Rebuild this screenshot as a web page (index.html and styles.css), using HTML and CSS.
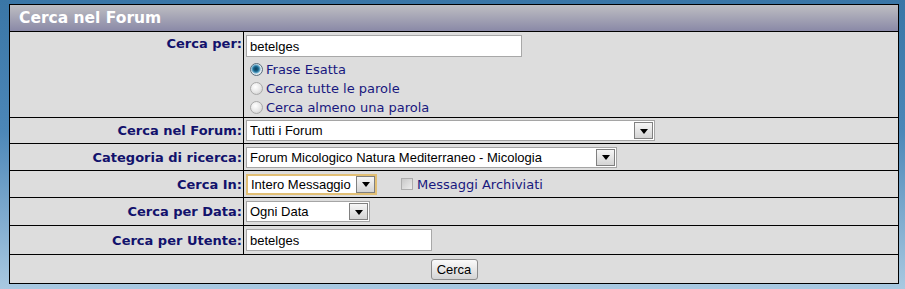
FILE: index.html
```html
<!DOCTYPE html>
<html lang="it">
<head>
    <meta charset="UTF-8">
    <meta name="viewport" content="width=device-width, initial-scale=1.0">
    <title>Cerca nel Forum</title>
    <link rel="stylesheet" href="styles.css">
</head>
<body>
    <form class="search" action="javascript:;">
        <div class="head">Cerca nel Forum</div>

        <div class="label top">Cerca per:</div>
        <div class="value top">
            <input type="text" class="text wide" value="betelges">
            <ul class="options">
                <li><label><input type="radio" name="mode" checked> Frase Esatta</label></li>
                <li><label><input type="radio" name="mode"> Cerca tutte le parole</label></li>
                <li><label><input type="radio" name="mode"> Cerca almeno una parola</label></li>
            </ul>
        </div>

        <div class="label">Cerca nel Forum:</div>
        <div class="value">
            <span class="drop forum">
                <select><option>Tutti i Forum</option></select>
                <span class="arrow"></span>
            </span>
        </div>

        <div class="label">Categoria di ricerca:</div>
        <div class="value">
            <span class="drop category">
                <select><option>Forum Micologico Natura Mediterraneo - Micologia</option></select>
                <span class="arrow"></span>
            </span>
        </div>

        <div class="label">Cerca In:</div>
        <div class="value">
            <span class="drop where focus">
                <select><option>Intero Messaggio</option></select>
                <span class="arrow"></span>
            </span>
            <label class="archive"><input type="checkbox"> Messaggi Archiviati</label>
        </div>

        <div class="label">Cerca per Data:</div>
        <div class="value">
            <span class="drop date">
                <select><option>Ogni Data</option></select>
                <span class="arrow"></span>
            </span>
        </div>

        <div class="label">Cerca per Utente:</div>
        <div class="value">
            <input type="text" class="text user" value="betelges">
        </div>

        <div class="foot">
            <button type="submit" class="btn">Cerca</button>
        </div>
    </form>
</body>
</html>
```

FILE: styles.css
```css
*{
    margin: 0;
    padding: 0;
    box-sizing: border-box;
}
body{
    height: 289px;
    padding: 4px 9px;
    background: linear-gradient(#3a76a6 0%, #4c87b8 45%, #a9c9e1 100%);
    font-family: "DejaVu Sans", Verdana, sans-serif;
    font-size: 13px;
}
.search{
    width: 890px;
    display: grid;
    grid-template-columns: 233px 1fr;
    grid-template-rows: 26px 85px 25px 26px 26px 27px 28px 28px;
    gap: 1px;
    border: 1px solid #000;
    background-color: #000;
}
.search .head{
    grid-column: 1 / 3;
    display: flex;
    align-items: center;
    padding-left: 9px;
    background: linear-gradient(#bebec2, #8a89a7);
    color: #fff;
    font-size: 15.5px;
    font-weight: bold;
}
.search .label{
    display: flex;
    align-items: center;
    justify-content: flex-end;
    padding-right: 1px;
    background-color: #dddddd;
    color: #12126c;
    font-weight: bold;
    font-size: 13px;
}
.search .label.top{
    align-items: flex-start;
    padding-top: 4px;
}
.search .value{
    display: flex;
    align-items: center;
    padding-left: 2px;
    background-color: #dddddd;
}
.search .value.top{
    flex-direction: column;
    align-items: flex-start;
    padding-top: 3px;
}
.text{
    height: 22px;
    border: 1px solid #a8a8a8;
    background: #fff;
    padding: 0 3px;
    font-family: "Liberation Sans", Arial, sans-serif;
    font-size: 13px;
    color: #000;
    outline: none;
}
.text.wide{
    width: 276px;
}
.text.user{
    width: 186px;
}
.options{
    list-style: none;
    margin-top: 3px;
}
.options li{
    height: 19px;
    display: flex;
    align-items: center;
}
.options label, .archive{
    display: flex;
    align-items: center;
    color: #18187e;
    font-size: 13px;
}
input[type=radio]{
    appearance: none;
    width: 13px;
    height: 13px;
    margin: 0 3px 0 4px;
    border-radius: 50%;
    border: 1px solid #a9a9a9;
    background: radial-gradient(circle at 40% 35%, #ffffff 0%, #e6e6e6 55%, #c4c4c4 100%);
}
input[type=radio]:checked{
    border-color: #5a6e7e;
    background: radial-gradient(circle at 45% 45%, #0d3d58 0%, #16638a 28%, #5fa6c8 45%, #e8eef2 60%, #c9cfd4 100%);
}
input[type=checkbox]{
    appearance: none;
    width: 12px;
    height: 12px;
    margin-right: 4px;
    border: 1px solid #adadad;
    background: linear-gradient(135deg, #c8c8c8, #ececec);
}
.archive{
    margin-left: 24px;
}
.drop{
    display: inline-flex;
    height: 21px;
    border: 1px solid #a5a5a5;
    background: #fff;
}
.drop select{
    flex: 1;
    appearance: none;
    border: none;
    outline: none;
    background: transparent;
    padding-left: 3px;
    font-family: "Liberation Sans", Arial, sans-serif;
    font-size: 13px;
    color: #000;
}
.drop .arrow{
    width: 19px;
    margin: 1px;
    border: 1px solid #808080;
    background: linear-gradient(#f6f6f6, #d4d4d4);
    display: flex;
    align-items: center;
    justify-content: center;
}
.drop .arrow::after{
    content: "";
    border-left: 4px solid transparent;
    border-right: 4px solid transparent;
    border-top: 5px solid #000;
    margin-top: 1px;
}
.drop.forum{
    width: 409px;
}
.drop.category{
    width: 371px;
}
.drop.where{
    width: 131px;
}
.drop.focus{
    border: 2px solid #e2bf74;
}
.drop.focus .arrow{
    margin: 0;
}
.drop.date{
    width: 124px;
}
.search .foot{
    grid-column: 1 / 3;
    display: flex;
    align-items: center;
    justify-content: center;
    background-color: #dddddd;
}
.btn{
    width: 47px;
    height: 21px;
    border: 1px solid #8c8c8c;
    border-radius: 3px;
    background: linear-gradient(#fafafa, #e4e4e4 60%, #d4d4d4);
    font-family: "Liberation Sans", Arial, sans-serif;
    font-size: 13px;
    color: #000;
}
```
